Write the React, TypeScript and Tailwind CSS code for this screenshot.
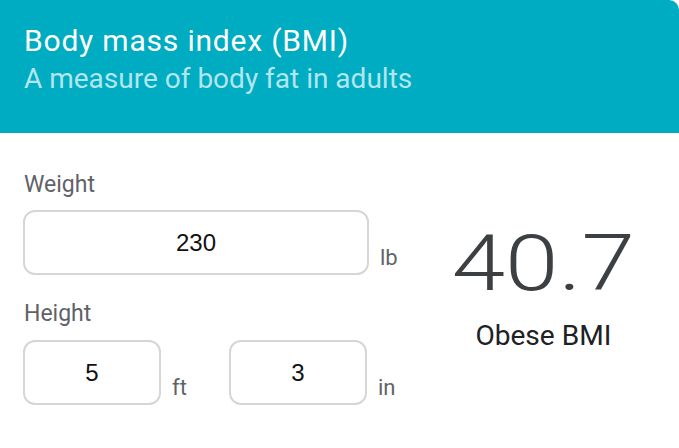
import React from "react";

function Field({ value, width }: { value: string; width: string }) {
  return (
    <div
      className={`${width} h-[65px] rounded-[12px] border-2 border-[#d6d6d6] bg-white flex items-center justify-center text-[24px] text-[#111]`}
      style={{ fontFamily: '"Liberation Sans", Arial, sans-serif' }}
    >
      {value}
    </div>
  );
}

export default function App() {
  return (
    <div
      className="w-[679px] h-[448px] bg-white overflow-hidden"
      style={{ fontFamily: 'Roboto, "Noto Sans", sans-serif' }}
    >
      <div className="h-[133px] bg-[#00acc1] rounded-tr-[10px] pl-6 pt-[24px]">
        <div className="text-white text-[30px] leading-[34px] tracking-[0.8px] whitespace-nowrap">
          Body mass index (BMI)
        </div>
        <div className="text-[#b2e6ee] text-[28px] leading-[32px] mt-[5px] whitespace-nowrap">
          A measure of body fat in adults
        </div>
      </div>
      <div className="flex pl-[23px] pt-[38px]">
        <div className="flex flex-col w-[387px]">
          <div className="text-[23px] leading-[28px] text-[#5f6368] pl-px">Weight</div>
          <div className="flex items-end gap-[11px] mt-[11px]">
            <Field value="230" width="w-[346px]" />
            <div className="text-[22px] leading-[28px] text-[#5f6368] mb-[3px]">lb</div>
          </div>
          <div className="text-[23px] leading-[28px] text-[#5f6368] pl-px mt-[25px]">Height</div>
          <div className="flex items-end mt-[12px]">
            <Field value="5" width="w-[138px]" />
            <div className="text-[22px] leading-[28px] text-[#5f6368] mb-[3px] ml-[11px] w-[57px]">ft</div>
            <Field value="3" width="w-[138px]" />
            <div className="text-[22px] leading-[28px] text-[#5f6368] mb-[3px] ml-[11px]">in</div>
          </div>
        </div>
        <div className="ml-[23px] w-[220px] flex flex-col items-center pt-[55px]">
          <div className="text-[77px] leading-[77px] font-light text-[#3c4043] scale-x-[1.25] whitespace-nowrap">
            40.7
          </div>
          <div className="text-[27px] leading-[32px] text-[#202124] mt-[17px] scale-x-[1.04] whitespace-nowrap">
            Obese BMI
          </div>
        </div>
      </div>
    </div>
  );
}
